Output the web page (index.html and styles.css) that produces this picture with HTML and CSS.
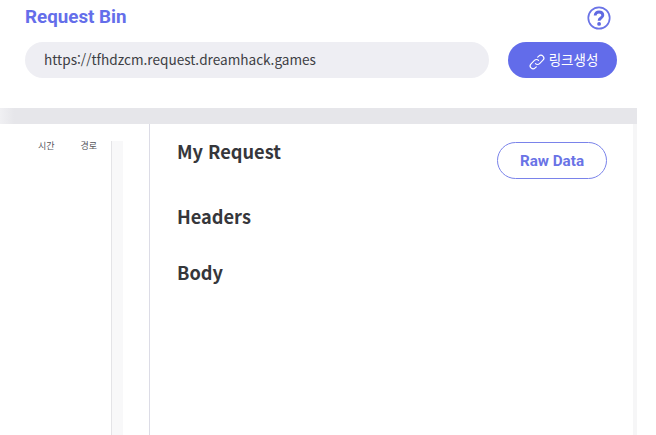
FILE: index.html
```html
<!DOCTYPE html>
<html lang="ko">
<head>
<meta charset="utf-8">
<title>Request Bin</title>
<link rel="stylesheet" href="styles.css">
</head>
<body>
<div class="page">
  <header class="top">
    <div class="title-row">
      <h1 class="brand">Request Bin</h1>
      <svg class="help" width="24" height="24" viewBox="0 0 24 24" aria-hidden="true">
        <circle cx="12" cy="12" r="10.7" fill="none" stroke="#6a73e6" stroke-width="1.7"/>
        <path d="M8.2 9.6c0-2.4 1.7-3.6 3.8-3.6s3.8 1.2 3.8 3.3c0 2.8-3.7 2.6-3.7 5.4" fill="none" stroke="#5f69e2" stroke-width="2.9"/>
        <circle cx="12.1" cy="17.9" r="1.9" fill="#5f69e2"/>
      </svg>
    </div>
    <div class="url-row">
      <div class="url">https://tfhdzcm.request.dreamhack.games</div>
      <button class="make">
        <svg width="18" height="18" viewBox="0 0 16 16" aria-hidden="true">
          <path d="M6.6 9.4a2.6 2.6 0 0 0 3.7 0l3-3a2.6 2.6 0 0 0-3.7-3.7l-1 1M9.4 6.6a2.6 2.6 0 0 0-3.7 0l-3 3a2.6 2.6 0 0 0 3.7 3.7l1-1" fill="none" stroke="#fff" stroke-width="1" stroke-linecap="round"/>
        </svg>
        <span>링크생성</span>
      </button>
    </div>
  </header>
  <div class="band"></div>
  <main class="body">
    <aside class="side">
      <div class="cols"><span class="col">시간</span><span class="col">경로</span></div>
      <div class="scroll"></div>
    </aside>
    <section class="detail">
      <div class="detail-head">
        <h2 class="heading">My Request</h2>
        <button class="raw">Raw Data</button>
      </div>
      <h2 class="heading headers">Headers</h2>
      <h2 class="heading bodyh">Body</h2>
    </section>
  </main>
</div>
</body>
</html>
```
FILE: styles.css
```css
html, body { margin: 0; padding: 0; background: #fff; overflow: hidden; }
.page { width: 637px; height: 435px; display: flex; flex-direction: column; font-family: "Noto Sans CJK KR", "Noto Sans", sans-serif; }
.top { height: 108px; box-sizing: border-box; padding: 5px 20px 0 25px; }
.title-row { display: flex; justify-content: space-between; align-items: center; height: 25px; }
.brand { margin: 0 0 1px; font: 700 18.8px/24px Roboto, sans-serif; color: #646eea; }
.help { margin-right: 6px; }
.url-row { display: flex; gap: 19px; margin-top: 12px; }
.url { flex: 0 0 464px; height: 36px; box-sizing: border-box; padding-left: 19px; border-radius: 18px; background: #eeeef3; color: #3d3e44; font-size: 13.6px; line-height: 34px; }
.make { flex: 0 0 109px; height: 36px; border: 0; border-radius: 18px; background: #626cea; color: #fff; font: 400 13.5px/18px "Noto Sans CJK KR", sans-serif; display: flex; align-items: center; justify-content: center; gap: 3px; padding: 0 0 0 1px; }
.make span { margin-top: -3px; }
.make svg { margin-top: 3px; }
.band { height: 16px; background: linear-gradient(90deg, #f0f0f3, #e6e6ea 14px); flex: none; }
.body { flex: 1; display: flex; min-height: 0; border-right: 4px solid #f6f6f7; }
.side { width: 149px; flex: none; border-right: 1px solid #dcdce6; position: relative; }
.cols { display: flex; gap: 26px; padding: 16px 0 0 38px; font-size: 9px; line-height: 11px; color: #55565c; }
.scroll { position: absolute; left: 111px; top: 17px; bottom: 0; width: 11px; background: #f8f8f9; border-left: 1px solid #e4e4e7; }
.detail { flex: 1; padding: 16px 26px 0 27px; color: #36373b; }
.detail-head { display: flex; justify-content: space-between; align-items: flex-start; height: 66px; }
.heading { margin: 0; font-size: 18.2px; line-height: 22px; font-weight: 700; font-family: "Noto Sans CJK KR", "Noto Sans", sans-serif; }
.headers { height: 56px; margin-top: -1px; }
.raw { width: 110px; height: 37px; margin-top: 2px; box-sizing: border-box; border: 1px solid #7a83ea; border-radius: 19px; background: #fff; color: #6a73e6; font: 700 15.2px Roboto, sans-serif; padding: 0; }
```
